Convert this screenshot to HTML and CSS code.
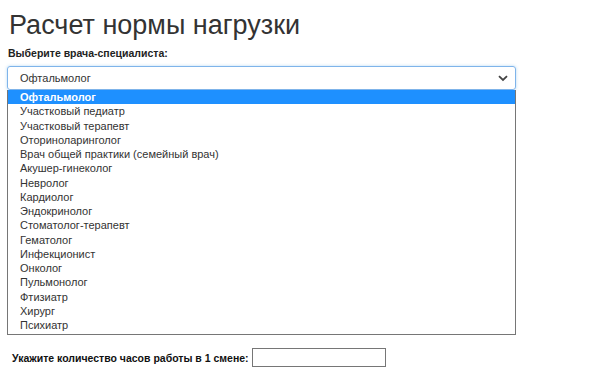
FILE: index.html
```html
<!DOCTYPE html>
<html lang="ru">
<head>
<meta charset="utf-8">
<link rel="stylesheet" href="styles.css">
</head>
<body>
<div class="page">
  <h1 class="title">Расчет нормы нагрузки</h1>
  <div class="field">
    <label class="label">Выберите врача-специалиста:</label>
    <div class="select-wrap">
      <div class="select">
        <span class="select-value">Офтальмолог</span>
        <svg class="chevron" width="10" height="7" viewBox="0 0 10 7"><path d="M1 1.2 L5 5 L9 1.2" fill="none" stroke="#444" stroke-width="1.8"/></svg>
      </div>
      <ul class="dropdown">
        <li class="opt selected">Офтальмолог</li>
        <li class="opt">Участковый педиатр</li>
        <li class="opt">Участковый терапевт</li>
        <li class="opt">Оториноларинголог</li>
        <li class="opt">Врач общей практики (семейный врач)</li>
        <li class="opt">Акушер-гинеколог</li>
        <li class="opt">Невролог</li>
        <li class="opt">Кардиолог</li>
        <li class="opt">Эндокринолог</li>
        <li class="opt">Стоматолог-терапевт</li>
        <li class="opt">Гематолог</li>
        <li class="opt">Инфекционист</li>
        <li class="opt">Онколог</li>
        <li class="opt">Пульмонолог</li>
        <li class="opt">Фтизиатр</li>
        <li class="opt">Хирург</li>
        <li class="opt">Психиатр</li>
      </ul>
    </div>
  </div>
  <div class="spacer"></div>
  <div class="hours">
    <span class="hours-label">Укажите количество часов работы в 1 смене:</span>
    <span class="hours-input"></span>
  </div>
</div>
</body>
</html>
```
FILE: styles.css
```css
html, body {
  margin: 0;
  padding: 0;
  background: #fff;
}
body {
  font-family: "Liberation Sans", Arial, sans-serif;
  color: #333;
}
.page {
  padding: 0 0 0 7px;
  width: 600px;
  box-sizing: border-box;
}
.title {
  margin: 0;
  padding: 9px 0 0 2px;
  font-size: 27px;
  font-weight: normal;
  line-height: 32px;
  color: #333;
}
.field {
  display: flex;
  flex-direction: column;
}
.label {
  font-size: 10.5px;
  font-weight: bold;
  color: #222;
  line-height: 14px;
  margin: 5px 0 0 1px;
}
.select-wrap {
  position: relative;
  width: 509px;
  margin-top: 6px;
}
.select {
  height: 24px;
  box-sizing: border-box;
  border: 1px solid #7fb4ea;
  border-radius: 3px;
  box-shadow: 0 0 3px rgba(102, 175, 233, 0.5);
  display: flex;
  align-items: center;
  justify-content: space-between;
  padding: 0 7px 0 12px;
  font-size: 11px;
  color: #333;
}
.chevron {
  display: block;
}
.dropdown {
  position: absolute;
  left: 0;
  top: 24px;
  width: 509px;
  box-sizing: border-box;
  margin: 0;
  padding: 0 0 2px;
  list-style: none;
  background: #fff;
  border: 1px solid #767676;
  border-top: none;
}
.opt {
  font-size: 11px;
  line-height: 14.25px;
  padding-left: 12px;
  color: #333;
  white-space: nowrap;
}
.opt.selected {
  background: #1e90ff;
  color: #fff;
  font-weight: bold;
}
.spacer {
  height: 258px;
}
.hours {
  display: flex;
  align-items: center;
  gap: 3px;
  padding-left: 5px;
}
.hours-label {
  font-size: 10.5px;
  font-weight: bold;
  color: #111;
}
.hours-input {
  width: 134px;
  height: 19px;
  box-sizing: border-box;
  border: 1px solid #767676;
  background: #fff;
}
```
